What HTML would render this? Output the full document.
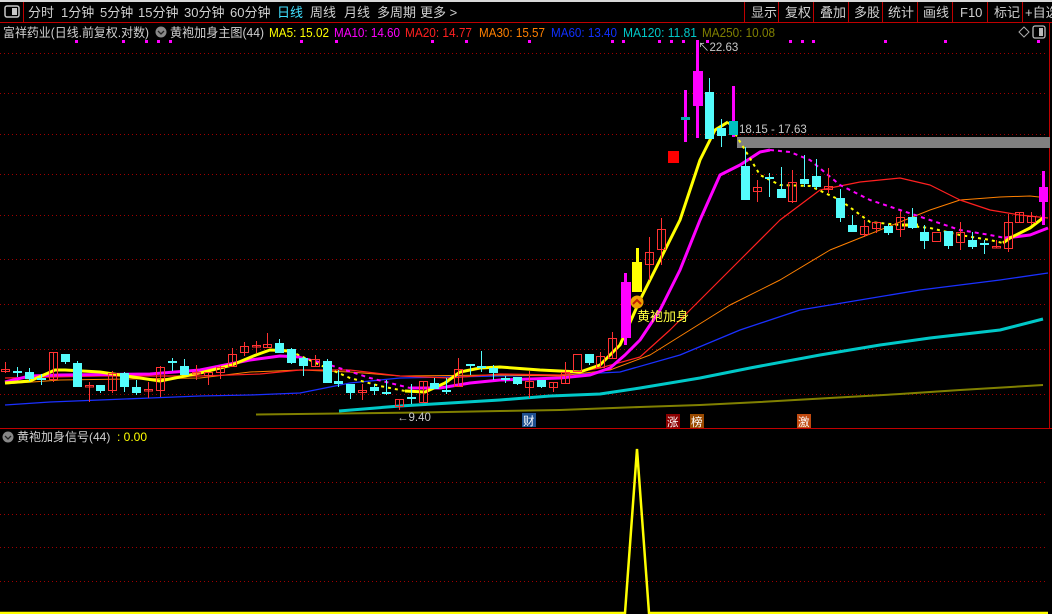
<!DOCTYPE html>
<html><head><meta charset="utf-8"><style>
html,body{margin:0;padding:0;background:#000;width:1052px;height:614px;overflow:hidden}
svg{display:block;font-family:"Liberation Sans","Noto Sans CJK SC",sans-serif}
</style></head><body>
<svg width="1052" height="614" viewBox="0 0 1052 614" xmlns="http://www.w3.org/2000/svg">
<rect width="1052" height="614" fill="#000"/>
<!-- top bar -->
<rect x="0" y="0" width="1052" height="2" fill="#d8d8d8"/>
<rect x="0" y="22" width="1052" height="1" fill="#c00000"/>
<rect x="23" y="2" width="1" height="20" fill="#c00000"/>
<rect x="5" y="6" width="14" height="11" rx="2" fill="none" stroke="#c8c8c8" stroke-width="1.5"/>
<rect x="12" y="8" width="5" height="7" fill="#c8c8c8"/>
<g font-size="13" fill="#d0d0d0">
<text x="28" y="17">分时</text><text x="61" y="17">1分钟</text><text x="100" y="17">5分钟</text>
<text x="138" y="17">15分钟</text><text x="184" y="17">30分钟</text><text x="230" y="17">60分钟</text>
<text x="277" y="17" fill="#40e0ff">日线</text><text x="310" y="17">周线</text><text x="344" y="17">月线</text>
<text x="377" y="17">多周期</text><text x="420" y="17">更多 &gt;</text>
<text x="751" y="17">显示</text><text x="785" y="17">复权</text><text x="820" y="17">叠加</text>
<text x="854" y="17">多股</text><text x="888" y="17">统计</text><text x="923" y="17">画线</text>
<text x="960" y="17">F10</text><text x="994" y="17">标记</text><text x="1025" y="17">+自选</text>
</g>
<g fill="#c00000">
<rect x="744" y="2" width="1" height="20"/><rect x="778" y="2" width="1" height="20"/><rect x="813" y="2" width="1" height="20"/>
<rect x="848" y="2" width="1" height="20"/><rect x="882" y="2" width="1" height="20"/><rect x="917" y="2" width="1" height="20"/>
<rect x="952" y="2" width="1" height="20"/><rect x="987" y="2" width="1" height="20"/><rect x="1022" y="2" width="1" height="20"/>
<rect x="1049" y="22" width="1" height="406"/>
</g>
<!-- header row -->
<g font-size="12.5" lengthAdjust="spacingAndGlyphs">
<text x="3" y="37" fill="#d0d0d0" textLength="146" lengthAdjust="spacingAndGlyphs">富祥药业(日线.前复权.对数)</text>
<circle cx="161" cy="32" r="5.5" fill="#888"/><path d="M158 31l3 3 3-3" stroke="#222" stroke-width="1.3" fill="none"/>
<text x="170" y="37" fill="#d0d0d0" textLength="94" lengthAdjust="spacingAndGlyphs">黄袍加身主图(44)</text>
<text x="269" y="37" fill="#ffff00" textLength="60" lengthAdjust="spacingAndGlyphs">MA5: 15.02</text>
<text x="334" y="37" fill="#ff00ff" textLength="66" lengthAdjust="spacingAndGlyphs">MA10: 14.60</text>
<text x="405" y="37" fill="#ff2020" textLength="67" lengthAdjust="spacingAndGlyphs">MA20: 14.77</text>
<text x="479" y="37" fill="#ff8000" textLength="66" lengthAdjust="spacingAndGlyphs">MA30: 15.57</text>
<text x="551" y="37" fill="#1030ff" textLength="66" lengthAdjust="spacingAndGlyphs">MA60: 13.40</text>
<text x="623" y="37" fill="#00c8c8" textLength="74" lengthAdjust="spacingAndGlyphs">MA120: 11.81</text>
<text x="702" y="37" fill="#808000" textLength="73" lengthAdjust="spacingAndGlyphs">MA250: 10.08</text>
</g>
<path d="M1024 27l5 5-5 5-5-5z" fill="none" stroke="#aaa"/>
<rect x="1033" y="26" width="12" height="12" rx="2" fill="none" stroke="#bbb" stroke-width="1.3"/><rect x="1039" y="28" width="4" height="8" fill="#bbb"/>
<g fill="#ff00ff">
<rect x="75" y="40" width="3" height="3"/><rect x="122" y="40" width="3" height="3"/><rect x="145" y="40" width="3" height="3"/><rect x="157" y="40" width="3" height="3"/><rect x="169" y="40" width="3" height="3"/>
<rect x="300" y="40" width="3" height="3"/><rect x="335" y="40" width="3" height="3"/><rect x="431" y="40" width="3" height="3"/><rect x="465" y="40" width="3" height="3"/>
<rect x="528" y="40" width="3" height="3"/><rect x="611" y="40" width="3" height="3"/><rect x="622" y="40" width="3" height="3"/><rect x="658" y="40" width="3" height="3"/>
<rect x="670" y="40" width="3" height="3"/><rect x="682" y="40" width="3" height="3"/><rect x="706" y="40" width="3" height="3"/><rect x="789" y="40" width="3" height="3"/>
<rect x="801" y="40" width="3" height="3"/><rect x="812" y="40" width="3" height="3"/><rect x="884" y="40" width="3" height="3"/><rect x="944" y="40" width="3" height="3"/><rect x="1037" y="40" width="3" height="3"/>
</g>
<!-- grid -->
<g stroke="#a00000" stroke-dasharray="1 3" stroke-width="1">
<line x1="0" y1="53.5" x2="1048" y2="53.5"/><line x1="0" y1="93.5" x2="1048" y2="93.5"/><line x1="0" y1="134.5" x2="1048" y2="134.5"/>
<line x1="0" y1="174.5" x2="1048" y2="174.5"/><line x1="0" y1="215.5" x2="1048" y2="215.5"/><line x1="0" y1="259.5" x2="1048" y2="259.5"/>
<line x1="0" y1="304.5" x2="1048" y2="304.5"/><line x1="0" y1="349.5" x2="1048" y2="349.5"/><line x1="0" y1="394.5" x2="1048" y2="394.5"/>
<line x1="0" y1="482.5" x2="1048" y2="482.5"/><line x1="0" y1="514.5" x2="1048" y2="514.5"/><line x1="0" y1="547.5" x2="1048" y2="547.5"/><line x1="0" y1="581.5" x2="1048" y2="581.5"/>
</g>
<!-- gray band -->
<rect x="737" y="137" width="313" height="11" fill="#808080"/>
<!-- MA lines -->
<g fill="none" stroke-linejoin="round">
<polyline stroke="#808000" stroke-width="2" points="256,414.5 420,412.5 500,411 560,410 640,407 700,405 760,402 830,398 900,394 960,390 1043,385"/>
<polyline stroke="#00c8c8" stroke-width="3" points="339,411 400,406 450,403 500,400 550,396 600,394 640,388 700,378 750,368 820,355 880,345 930,338 1000,330 1043,319"/>
<polyline stroke="#1a30ff" stroke-width="1.3" points="5,405 50,402 150,398 200,396 250,395 300,393 350,383 400,378 500,376 560,375 620,372 680,355 740,330 800,310 860,300 920,290 1000,280 1048,273"/>
<polyline stroke="#ff8000" stroke-width="1" points="5,384 60,380 200,378 250,372 300,370 350,372 400,376 500,375 560,376 610,370 650,355 690,330 730,305 780,280 830,250 880,230 930,210 960,200 1000,197 1030,196 1048,198"/>
<polyline stroke="#ff2020" stroke-width="1.2" points="5,378 100,376 200,376 260,374 300,370 350,370 400,376 450,378 500,374 560,375 600,368 640,357 670,330 700,300 740,260 780,220 820,190 860,182 900,178 930,185 960,200 990,210 1020,215 1048,218"/>
<polyline stroke="#ff00ff" stroke-width="3" points="5,382 30,376 60,375 150,374 200,370 250,360 280,356 300,357"/>
<polyline stroke="#ff00ff" stroke-width="2" stroke-dasharray="4 4" points="300,357 330,365 370,378 410,388"/>
<polyline stroke="#ff00ff" stroke-width="3" points="410,388 440,388 470,383 500,380 560,378 590,375 610,368 625,355 640,340 660,310 680,270 700,220 720,175 740,165 760,152 770,150"/>
<polyline stroke="#ff00ff" stroke-width="2" stroke-dasharray="4 4" points="770,150 790,152 810,160 840,185 870,200 900,210 930,220 960,230 990,235 1005,238"/>
<polyline stroke="#ff00ff" stroke-width="3" points="1005,238 1030,235 1048,228"/>
<polyline stroke="#ffff00" stroke-width="3" points="5,383 30,381 55,370 65,370 100,372 140,378 160,381 180,377 200,373 232,365 256,355 270,350 290,351"/>
<polyline stroke="#ffff00" stroke-width="2" stroke-dasharray="3 4" points="290,351 320,365 350,378 380,386 405,391"/>
<polyline stroke="#ffff00" stroke-width="3" points="405,391 425,392 445,383 460,372 480,368 500,367 540,370 580,372 600,365 620,345 640,300 660,260 680,220 700,160 715,130 728,122"/>
<polyline stroke="#ffff00" stroke-width="2" stroke-dasharray="3 4" points="728,122 745,150 760,175 780,185 810,186 840,200 870,222 900,225 930,228 960,235 990,240 1003,243"/>
<polyline stroke="#ffff00" stroke-width="3" points="902,225 918,225"/>
<polyline stroke="#ffff00" stroke-width="3" points="1003,243 1010,238 1030,228 1043,218"/>
</g>
<!-- candles -->
<g stroke="#54fcfc" stroke-width="1">
<line x1="17.5" y1="367" x2="17.5" y2="377"/><line x1="29.5" y1="368" x2="29.5" y2="381"/><line x1="41.5" y1="374" x2="41.5" y2="385"/>
<line x1="65.5" y1="354" x2="65.5" y2="364"/><line x1="77.5" y1="361" x2="77.5" y2="387"/><line x1="100.5" y1="385" x2="100.5" y2="393"/>
<line x1="124.5" y1="372" x2="124.5" y2="392"/><line x1="136.5" y1="380" x2="136.5" y2="395"/><line x1="172.5" y1="358" x2="172.5" y2="371"/>
<line x1="184.5" y1="359" x2="184.5" y2="375"/><line x1="279.5" y1="339" x2="279.5" y2="353"/><line x1="291.5" y1="348" x2="291.5" y2="364"/>
<line x1="303.5" y1="357" x2="303.5" y2="376"/><line x1="327.5" y1="359" x2="327.5" y2="383"/><line x1="338.5" y1="370" x2="338.5" y2="387"/>
<line x1="350.5" y1="384" x2="350.5" y2="399"/><line x1="374.5" y1="384" x2="374.5" y2="395"/><line x1="386.5" y1="380" x2="386.5" y2="395"/>
<line x1="411.5" y1="384" x2="411.5" y2="404"/><line x1="434.5" y1="378" x2="434.5" y2="389"/><line x1="446.5" y1="378" x2="446.5" y2="394"/>
<line x1="470.5" y1="364" x2="470.5" y2="375"/><line x1="481.5" y1="351" x2="481.5" y2="372"/><line x1="493.5" y1="365" x2="493.5" y2="380"/>
<line x1="505.5" y1="376" x2="505.5" y2="383"/><line x1="517.5" y1="377" x2="517.5" y2="385"/><line x1="541.5" y1="380" x2="541.5" y2="388"/>
<line x1="589.5" y1="354" x2="589.5" y2="365"/><line x1="709.5" y1="78" x2="709.5" y2="139"/><line x1="721.5" y1="119" x2="721.5" y2="147"/>
<line x1="745.5" y1="147" x2="745.5" y2="200"/><line x1="769.5" y1="173" x2="769.5" y2="197"/><line x1="781.5" y1="167" x2="781.5" y2="198"/>
<line x1="804.5" y1="155" x2="804.5" y2="187"/><line x1="816.5" y1="159" x2="816.5" y2="189"/><line x1="840.5" y1="189" x2="840.5" y2="222"/>
<line x1="852.5" y1="215" x2="852.5" y2="232"/><line x1="888.5" y1="224" x2="888.5" y2="235"/><line x1="912.5" y1="208" x2="912.5" y2="229"/>
<line x1="924.5" y1="225" x2="924.5" y2="249"/><line x1="948.5" y1="231" x2="948.5" y2="249"/><line x1="972.5" y1="232" x2="972.5" y2="249"/>
<line x1="984.5" y1="240" x2="984.5" y2="254"/>
</g>
<g fill="#54fcfc">
<rect x="13" y="371" width="9" height="2"/><rect x="25" y="372" width="9" height="7"/><rect x="37" y="378" width="9" height="2"/>
<rect x="61" y="354" width="9" height="8"/><rect x="73" y="363" width="9" height="24"/><rect x="96" y="385" width="9" height="6"/>
<rect x="120" y="373" width="9" height="14"/><rect x="132" y="387" width="9" height="6"/><rect x="168" y="361" width="9" height="2"/>
<rect x="180" y="366" width="9" height="9"/><rect x="275" y="343" width="9" height="10"/><rect x="287" y="349" width="9" height="14"/>
<rect x="299" y="358" width="9" height="8"/><rect x="323" y="361" width="9" height="22"/><rect x="334" y="381" width="9" height="3"/>
<rect x="346" y="384" width="9" height="9"/><rect x="370" y="387" width="9" height="4"/><rect x="382" y="392" width="9" height="2"/>
<rect x="407" y="397" width="9" height="2"/><rect x="430" y="383" width="9" height="6"/><rect x="442" y="390" width="9" height="2"/>
<rect x="466" y="364" width="9" height="2"/><rect x="477" y="366" width="9" height="2"/><rect x="489" y="368" width="9" height="5"/>
<rect x="501" y="378" width="9" height="2"/><rect x="513" y="377" width="9" height="7"/><rect x="537" y="380" width="9" height="7"/>
<rect x="585" y="354" width="9" height="9"/><rect x="705" y="92" width="9" height="47"/><rect x="717" y="128" width="9" height="8"/>
<rect x="741" y="166" width="9" height="34"/><rect x="765" y="177" width="9" height="2"/><rect x="777" y="189" width="9" height="9"/>
<rect x="800" y="179" width="9" height="5"/><rect x="812" y="176" width="9" height="11"/><rect x="836" y="198" width="9" height="20"/>
<rect x="848" y="225" width="9" height="7"/><rect x="884" y="226" width="9" height="7"/><rect x="908" y="217" width="9" height="11"/>
<rect x="920" y="232" width="9" height="9"/><rect x="944" y="231" width="9" height="15"/><rect x="968" y="240" width="9" height="7"/>
<rect x="980" y="243" width="9" height="2"/>
</g>
<g stroke="#ff3232" stroke-width="1" fill="none">
<line x1="5.5" y1="362" x2="5.5" y2="373"/><rect x="1.5" y="369.5" width="8" height="2"/>
<line x1="53.5" y1="352" x2="53.5" y2="382"/><rect x="49.5" y="352.5" width="8" height="27"/>
<line x1="89.5" y1="382" x2="89.5" y2="402"/><rect x="85.5" y="385.5" width="8" height="1.5"/>
<line x1="112.5" y1="371" x2="112.5" y2="393"/><rect x="108.5" y="373.5" width="8" height="17"/>
<line x1="148.5" y1="382" x2="148.5" y2="398"/><rect x="144.5" y="389.5" width="8" height="1.5"/>
<line x1="160.5" y1="366" x2="160.5" y2="397"/><rect x="156.5" y="367.5" width="8" height="23"/>
<line x1="196.5" y1="365" x2="196.5" y2="380"/><rect x="192.5" y="372.5" width="8" height="1.5"/>
<line x1="208.5" y1="372" x2="208.5" y2="385"/><rect x="204.5" y="372.5" width="8" height="3"/>
<line x1="220.5" y1="366" x2="220.5" y2="379"/><rect x="216.5" y="367.5" width="8" height="5"/>
<line x1="232.5" y1="348" x2="232.5" y2="367"/><rect x="228.5" y="354.5" width="8" height="12"/>
<line x1="244.5" y1="342" x2="244.5" y2="356"/><rect x="240.5" y="346.5" width="8" height="6"/>
<line x1="256.5" y1="341" x2="256.5" y2="353"/><rect x="252.5" y="345.5" width="8" height="1.5"/>
<line x1="267.5" y1="333" x2="267.5" y2="348"/><rect x="263.5" y="344.5" width="8" height="3"/>
<line x1="315.5" y1="355" x2="315.5" y2="367"/><rect x="311.5" y="359.5" width="8" height="7"/>
<line x1="362.5" y1="384" x2="362.5" y2="400"/><rect x="358.5" y="390.5" width="8" height="2"/>
<line x1="399.5" y1="399" x2="399.5" y2="410"/><rect x="395.5" y="399.5" width="8" height="7"/>
<line x1="423.5" y1="381" x2="423.5" y2="403"/><rect x="419.5" y="381.5" width="8" height="21"/>
<line x1="458.5" y1="358" x2="458.5" y2="387"/><rect x="454.5" y="369.5" width="8" height="17"/>
<line x1="529.5" y1="371" x2="529.5" y2="398"/><rect x="525.5" y="381.5" width="8" height="6"/>
<line x1="553.5" y1="382" x2="553.5" y2="392"/><rect x="549.5" y="382.5" width="8" height="5"/>
<line x1="565.5" y1="362" x2="565.5" y2="383"/><rect x="561.5" y="372.5" width="8" height="11"/>
<rect x="573.5" y="354.5" width="8" height="17"/>
<line x1="600.5" y1="352" x2="600.5" y2="367"/><rect x="596.5" y="356.5" width="8" height="11"/>
<line x1="612.5" y1="332" x2="612.5" y2="358"/><rect x="608.5" y="338.5" width="8" height="20"/>
<line x1="649.5" y1="237" x2="649.5" y2="280"/><rect x="645.5" y="252.5" width="8" height="12"/>
<line x1="661.5" y1="218" x2="661.5" y2="265"/><rect x="657.5" y="229.5" width="8" height="20"/>
<line x1="757.5" y1="180" x2="757.5" y2="202"/><rect x="753.5" y="187.5" width="8" height="4"/>
<line x1="792.5" y1="170" x2="792.5" y2="203"/><rect x="788.5" y="182.5" width="8" height="19"/>
<line x1="828.5" y1="168" x2="828.5" y2="193"/><rect x="824.5" y="186.5" width="8" height="3"/>
<line x1="864.5" y1="220" x2="864.5" y2="237"/><rect x="860.5" y="226.5" width="8" height="8"/>
<line x1="876.5" y1="222" x2="876.5" y2="233"/><rect x="872.5" y="222.5" width="8" height="6"/>
<line x1="900.5" y1="211" x2="900.5" y2="237"/><rect x="896.5" y="217.5" width="8" height="12"/>
<rect x="932.5" y="232.5" width="8" height="9"/>
<line x1="960.5" y1="222" x2="960.5" y2="250"/><rect x="956.5" y="232.5" width="8" height="10"/>
<line x1="996.5" y1="240" x2="996.5" y2="248"/><rect x="992.5" y="246.5" width="8" height="1.5"/>
<line x1="1008.5" y1="214" x2="1008.5" y2="252"/><rect x="1004.5" y="222.5" width="8" height="26"/>
<line x1="1019.5" y1="212" x2="1019.5" y2="223"/><rect x="1015.5" y="212.5" width="8" height="10"/>
<line x1="1031.5" y1="212" x2="1031.5" y2="225"/><rect x="1027.5" y="216.5" width="8" height="6"/>
</g>
<!-- special candles -->
<rect x="624" y="273" width="3" height="72" fill="#ff00ff"/><rect x="621" y="282" width="10" height="56" fill="#ff00ff"/>
<rect x="636" y="248" width="3" height="44" fill="#ffff00"/><rect x="632" y="262" width="10" height="30" fill="#ffff00"/>
<rect x="668" y="151" width="11" height="12" fill="#ff0000"/>
<rect x="684" y="90" width="3" height="52" fill="#ff00ff"/><rect x="681" y="117" width="9" height="3" fill="#00b0b0"/>
<rect x="696" y="40" width="3" height="98" fill="#ff00ff"/><rect x="693" y="71" width="10" height="35" fill="#ff00ff"/>
<rect x="732" y="86" width="3" height="51" fill="#ff00ff"/><rect x="729" y="121" width="9" height="14" fill="#00c0c0"/>
<rect x="1042" y="171" width="3" height="54" fill="#ff00ff"/><rect x="1039" y="187" width="9" height="15" fill="#ff00ff"/>
<!-- signal -->
<circle cx="637" cy="302" r="6.5" fill="#f0a000"/><path d="M633 304l4-4 4 4" stroke="#c02000" stroke-width="2" fill="none"/>
<text x="637" y="321" font-size="13" fill="#ffff40">黄袍加身</text>
<!-- annotations -->
<g font-size="11.5" fill="#c8c8c8">
<text x="698" y="51">↖22.63</text>
<text x="739" y="133">18.15 - 17.63</text>
<text x="397" y="421">←9.40</text>
</g>
<g font-size="11.5">
<rect x="522" y="413" width="14" height="14" fill="#1e4f8f"/><text x="523" y="425" fill="#fff">财</text>
<rect x="666" y="414" width="14" height="14" fill="#8b0000"/><text x="667" y="426" fill="#fff">涨</text>
<rect x="690" y="414" width="14" height="14" fill="#9a4a00"/><text x="691" y="426" fill="#fff">榜</text>
<rect x="797" y="414" width="14" height="14" fill="#c04a10"/><text x="798" y="426" fill="#fff">激</text>
</g>
<!-- separator -->
<rect x="0" y="428" width="1052" height="1" fill="#c00000"/>
<!-- sub panel -->
<circle cx="8" cy="437" r="5.5" fill="#888"/><path d="M5 436l3 3 3-3" stroke="#222" stroke-width="1.3" fill="none"/>
<text x="17" y="441" font-size="12" fill="#d0d0d0">黄袍加身信号(44)</text>
<text x="117" y="441" font-size="12" fill="#ffff00">: 0.00</text>
<polyline fill="none" stroke="#ffff00" stroke-width="2.5" points="0,613 625,613 637,449 649,613 1048,613"/>
</svg>
</body></html>
